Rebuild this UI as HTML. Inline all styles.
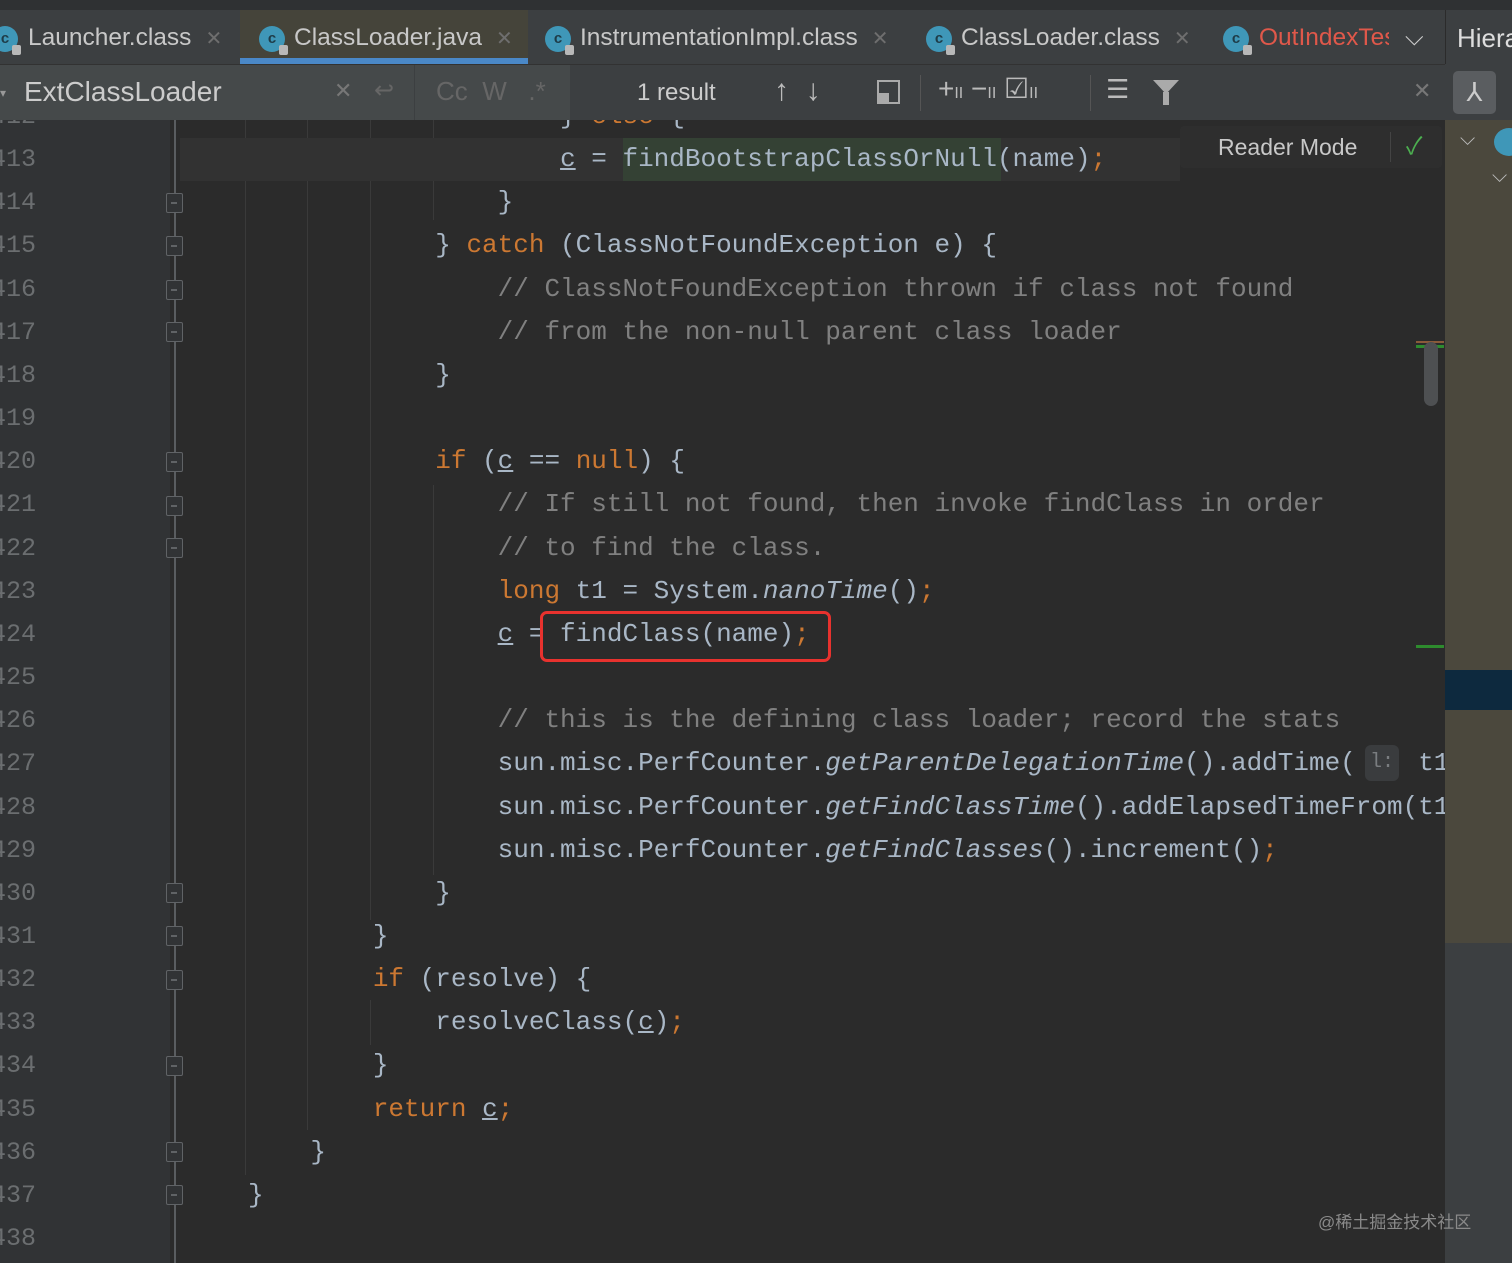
<!DOCTYPE html>
<html><head><meta charset="utf-8">
<style>
*{margin:0;padding:0;box-sizing:border-box}
body{width:1512px;height:1263px;overflow:hidden;background:#2b2b2b;position:relative;font-family:"Liberation Sans","Noto Sans CJK SC",sans-serif}
.abs{position:absolute}
#tabs{left:0;top:0;width:1512px;height:64px;background:#3c3f41;border-top:10px solid #2f3133}
.tab{position:absolute;top:16px;height:44px;line-height:44px;color:#c8c8c8;font-size:24.5px;white-space:nowrap}
.tab .x{color:#6e6e6e;margin-left:14px;font-size:20px}
.ic{position:absolute;top:26px;width:26px;height:26px;border-radius:50%;background:#3f97b8;color:#1e3c48;font-size:15px;line-height:26px;text-align:center;font-weight:bold;font-family:"Liberation Sans",sans-serif}
.ic::after{content:"";position:absolute;right:-3px;bottom:-3px;width:9px;height:10px;background:#b8b8b8;border-radius:2px}
#tb{left:0;top:64px;width:1445px;height:56px;background:#3c3f41;border-top:1px solid #323232}
.code{position:absolute;left:0;top:95px;width:1445px;font-family:"Liberation Mono","DejaVu Sans Mono",monospace;font-size:26px;color:#a9b7c6}
.ln{height:43.16px;line-height:43.16px;white-space:pre;position:relative}
.num{position:absolute;left:-9px;width:60px;color:#6b6e70;font-size:25px}
.t{position:absolute;left:248px}
.k{color:#cc7832}.c{color:#808080}.i{font-style:italic}.u{text-decoration:underline}
.g{position:absolute;width:1px;background:#3a3a3a}
.fold{position:absolute;left:166px;width:17px;height:20px;border:1.5px solid #606366;background:#313335;border-radius:2px}
.fold::after{content:"";position:absolute;left:4px;top:8px;width:6px;height:1.5px;background:#606366}
</style></head><body>
<div class="abs" style="left:0;top:0;width:170px;height:1263px;background:#313335"></div>
<div class="abs" style="left:174px;top:110px;width:1.5px;height:1153px;background:#5a5d60"></div>
<div class="g" style="left:245px;top:120px;height:1055px"></div>
<div class="g" style="left:307px;top:120px;height:1010px"></div>
<div class="g" style="left:370px;top:120px;height:800px"></div>
<div class="g" style="left:370px;top:1000px;height:45px"></div>
<div class="g" style="left:433px;top:120px;height:100px"></div>
<div class="g" style="left:433px;top:485px;height:390px"></div>
<div class="abs" style="left:180px;top:138px;width:1000px;height:43px;background:#323232"></div>
<div class="abs" style="left:623px;top:138px;width:378px;height:43px;background:#344134"></div>
<div class="code">
<div class="ln"><span class="num">412</span><span class="t">                    } <span class="k">else</span> {</span></div>
<div class="ln"><span class="num">413</span><span class="t">                    <span class="u">c</span> = findBootstrapClassOrNull(name)<span class="k">;</span></span></div>
<div class="ln"><span class="num">414</span><span class="t">                }</span></div>
<div class="ln"><span class="num">415</span><span class="t">            } <span class="k">catch</span> (ClassNotFoundException e) {</span></div>
<div class="ln"><span class="num">416</span><span class="t c">                // ClassNotFoundException thrown if class not found</span></div>
<div class="ln"><span class="num">417</span><span class="t c">                // from the non-null parent class loader</span></div>
<div class="ln"><span class="num">418</span><span class="t">            }</span></div>
<div class="ln"><span class="num">419</span><span class="t"></span></div>
<div class="ln"><span class="num">420</span><span class="t">            <span class="k">if</span> (<span class="u">c</span> == <span class="k">null</span>) {</span></div>
<div class="ln"><span class="num">421</span><span class="t c">                // If still not found, then invoke findClass in order</span></div>
<div class="ln"><span class="num">422</span><span class="t c">                // to find the class.</span></div>
<div class="ln"><span class="num">423</span><span class="t">                <span class="k">long</span> t1 = System.<span class="i">nanoTime</span>()<span class="k">;</span></span></div>
<div class="ln"><span class="num">424</span><span class="t">                <span class="u">c</span> = findClass(name)<span class="k">;</span></span></div>
<div class="ln"><span class="num">425</span><span class="t"></span></div>
<div class="ln"><span class="num">426</span><span class="t c">                // this is the defining class loader; record the stats</span></div>
<div class="ln"><span class="num">427</span><span class="t">                sun.misc.PerfCounter.<span class="i">getParentDelegationTime</span>().addTime(    t1</span></div>
<div class="ln"><span class="num">428</span><span class="t">                sun.misc.PerfCounter.<span class="i">getFindClassTime</span>().addElapsedTimeFrom(t1</span></div>
<div class="ln"><span class="num">429</span><span class="t">                sun.misc.PerfCounter.<span class="i">getFindClasses</span>().increment()<span class="k">;</span></span></div>
<div class="ln"><span class="num">430</span><span class="t">            }</span></div>
<div class="ln"><span class="num">431</span><span class="t">        }</span></div>
<div class="ln"><span class="num">432</span><span class="t">        <span class="k">if</span> (resolve) {</span></div>
<div class="ln"><span class="num">433</span><span class="t">            resolveClass(<span class="u">c</span>)<span class="k">;</span></span></div>
<div class="ln"><span class="num">434</span><span class="t">        }</span></div>
<div class="ln"><span class="num">435</span><span class="t">        <span class="k">return</span> <span class="u">c</span><span class="k">;</span></span></div>
<div class="ln"><span class="num">436</span><span class="t">    }</span></div>
<div class="ln"><span class="num">437</span><span class="t">}</span></div>
<div class="ln"><span class="num">438</span><span class="t"></span></div>
</div>
<div class="abs" style="left:1365px;top:745px;width:34px;height:36px;background:#3a3c3e;border-radius:6px;color:#7a7d80;font-size:20px;line-height:36px;text-align:center;font-family:'Liberation Mono',monospace">l:</div>
<div class="fold" style="top:193px"></div><div class="fold" style="top:236px"></div>
<div class="fold" style="top:280px"></div><div class="fold" style="top:322px"></div>
<div class="fold" style="top:452px"></div><div class="fold" style="top:496px"></div>
<div class="fold" style="top:538px"></div><div class="fold" style="top:883px"></div>
<div class="fold" style="top:926px"></div><div class="fold" style="top:970px"></div>
<div class="fold" style="top:1056px"></div><div class="fold" style="top:1142px"></div>
<div class="fold" style="top:1185px"></div>
<div class="abs" style="left:540px;top:611px;width:291px;height:51px;border:3px solid #e8322e;border-radius:7px"></div>
<div class="abs" style="left:1180px;top:126px;width:262px;height:42px;background:#2e2e2e;border-radius:4px;color:#c8c8c8;font-size:23px;line-height:42px;padding-left:38px">Reader Mode<span style="position:absolute;left:210px;top:6px;width:1px;height:30px;background:#444"></span><span style="position:absolute;left:226px;color:#4caf50;font-size:24px">✓</span></div>
<div class="abs" style="left:1416px;top:341px;width:28px;height:2px;background:#8a5a3a"></div>
<div class="abs" style="left:1416px;top:345px;width:28px;height:3px;background:#2e8b2e"></div>
<div class="abs" style="left:1424px;top:342px;width:14px;height:64px;background:#4e5052;border-radius:7px"></div>
<div class="abs" style="left:1416px;top:645px;width:28px;height:3px;background:#2e8b2e"></div>
<div class="abs" style="left:1445px;top:120px;width:67px;height:823px;background:#4b483d"></div>
<div class="abs" style="left:1445px;top:943px;width:67px;height:320px;background:#3c3f41"></div>
<div class="abs" style="left:1445px;top:670px;width:67px;height:40px;background:#0d293e"></div>
<div class="abs" style="left:1460px;top:128px;color:#bbb;font-size:20px">⌵</div>
<div class="abs" style="left:1494px;top:128px;width:30px;height:28px;border-radius:50%;background:#3f97b8"></div>
<div class="abs" style="left:1492px;top:165px;color:#bbb;font-size:20px">⌵</div>
<div id="tabs" class="abs"></div>
<div class="abs" style="left:240px;top:10px;width:288px;height:48px;background:#45443a"></div>
<div class="abs" style="left:240px;top:58px;width:288px;height:6px;background:#4a88c7"></div>
<div class="abs" style="left:1445px;top:10px;width:1px;height:110px;background:#2b2b2b"></div>
<span class="ic" style="left:-8px">c</span><div class="tab" style="left:28px">Launcher.class<span class="x">✕</span></div>
<span class="ic" style="left:259px">c</span><div class="tab" style="left:294px">ClassLoader.java<span class="x">✕</span></div>
<span class="ic" style="left:545px">c</span><div class="tab" style="left:580px">InstrumentationImpl.class<span class="x">✕</span></div>
<span class="ic" style="left:926px">c</span><div class="tab" style="left:961px">ClassLoader.class<span class="x">✕</span></div>
<span class="ic" style="left:1223px">c</span><div class="tab" style="left:1259px;width:130px;overflow:hidden;color:#e0584a">OutIndexTest</div>
<div class="tab" style="left:1405px;color:#ccc">⌵</div>
<div class="tab" style="left:1457px;color:#ddd;font-size:26px">Hiera</div>
<div id="tb" class="abs"></div>
<div class="abs" style="left:0;top:65px;width:570px;height:55px;background:#45494a"></div>
<div class="abs" style="left:414px;top:65px;width:1px;height:55px;background:#3c3f41"></div>
<div class="abs" style="left:24px;top:76px;color:#ccc;font-size:28px">ExtClassLoader</div>
<div class="abs" style="left:0;top:86px;color:#999;font-size:12px">▾</div>
<div class="abs" style="left:334px;top:78px;color:#777;font-size:22px">✕</div>
<div class="abs" style="left:374px;top:76px;color:#666;font-size:24px">↩</div>
<div class="abs" style="left:436px;top:76px;color:#666;font-size:26px">Cc&nbsp;&nbsp;W&nbsp;&nbsp;&nbsp;.*</div>
<div class="abs" style="left:637px;top:79px;color:#ccc;font-size:24px">1 result</div>
<div class="abs" style="left:774px;top:74px;color:#bbb;font-size:30px">↑&nbsp;&nbsp;↓</div>
<div class="abs" style="left:877px;top:80px;width:23px;height:24px;border:2px solid #aaa"><div style="position:absolute;left:0;bottom:0;width:10px;height:9px;background:#aaa"></div></div>
<div class="abs" style="left:920px;top:75px;width:1px;height:36px;background:#555"></div>
<div class="abs" style="left:938px;top:72px;color:#bbb;font-size:28px">+<span style="font-size:16px">II</span>&nbsp;−<span style="font-size:16px">II</span>&nbsp;☑<span style="font-size:16px">II</span></div>
<div class="abs" style="left:1090px;top:75px;width:1px;height:36px;background:#555"></div>
<div class="abs" style="left:1106px;top:74px;color:#bbb;font-size:26px">☰</div>
<div class="abs" style="left:1153px;top:80px;width:0;height:0;border-left:13px solid transparent;border-right:13px solid transparent;border-top:14px solid #aaa"></div>
<div class="abs" style="left:1163px;top:92px;width:6px;height:13px;background:#aaa"></div>
<div class="abs" style="left:1413px;top:78px;color:#777;font-size:22px">✕</div>
<div class="abs" style="left:1445px;top:64px;width:67px;height:56px;background:#3c3f41"></div>
<div class="abs" style="left:1453px;top:71px;width:43px;height:43px;background:#5a5d60;border-radius:5px;color:#ccc;font-size:26px;text-align:center;line-height:43px">⅄</div>
<div class="abs" style="left:1318px;top:1208px;color:#8a8a8a;font-size:17px">@稀土掘金技术社区</div>
</body></html>
